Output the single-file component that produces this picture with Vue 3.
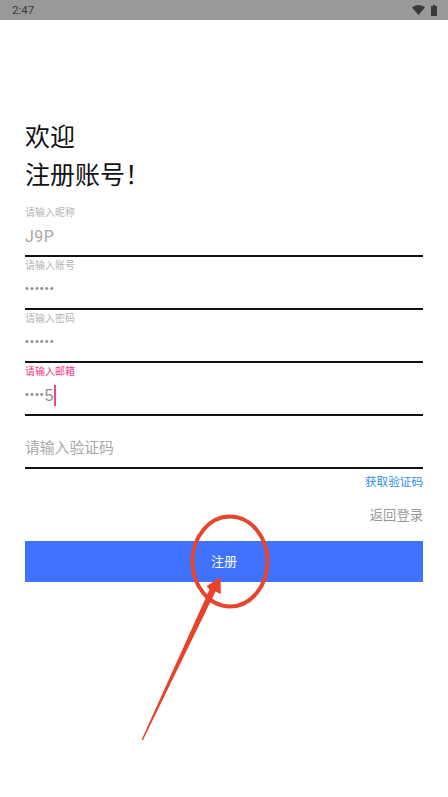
<template>
	<div class="page">
		<div class="status-bar">
			<span class="time">2:47</span>
			<div class="status-icons">
				<svg class="wifi" width="13" height="10" viewBox="0 0 13 10">
					<path d="M0 2.600C1.800 1 4 0 6.500 0S11.200 1 13 2.600L6.500 10Z" fill="#3a3a3a" />
				</svg>
				<svg class="battery" width="6" height="11" viewBox="0 0 6 11">
					<path d="M2 0h2v1h2v10H0V1h2Z" fill="#3a3a3a" />
				</svg>
			</div>
		</div>

		<div class="form">
			<div class="title">
				<div>欢迎</div>
				<div>注册账号！</div>
			</div>

			<div v-for="item in fields" :key="item.label" class="field" :class="{ focused: item.focused }">
				<div class="field-label">{{ item.label }}</div>
				<div class="field-value" :class="{ dots: item.dots }">
					<span>{{ item.value }}</span><span v-if="item.tail" class="tail">{{ item.tail }}</span>
					<i v-if="item.focused" class="cursor"></i>
				</div>
			</div>

			<div class="field code-field">
				<span>请输入验证码</span>
			</div>

			<div class="get-code">获取验证码</div>
			<div class="back-login">返回登录</div>
			<div class="submit">注册</div>
		</div>

		<svg class="mark" width="448" height="797" viewBox="0 0 448 797">
			<ellipse cx="230" cy="561.500" rx="37.500" ry="45" fill="none" stroke="#e5462c" stroke-width="4" />
			<path d="M141.500 740L143 740L215.500 591.500L220.800 594L220.500 577L206.700 586L209.500 589.500Z" fill="#ea4228" />
		</svg>
	</div>
</template>

<script setup>
	const fields = [
		{ label: "请输入昵称", value: "J9P" },
		{ label: "请输入账号", value: "••••••", dots: true },
		{ label: "请输入密码", value: "••••••", dots: true },
		{ label: "请输入邮箱", value: "••••", tail: "5", dots: true, focused: true }
	];
</script>

<style>
	body {
		margin: 0;
		background: #fff;
	}
</style>

<style scoped>
	.page {
		position: relative;
		width: 448px;
		height: 797px;
		overflow: hidden;
		background: #fff;
		font-family: "Roboto", "Noto Sans CJK SC", sans-serif;
	}

	.status-bar {
		display: flex;
		align-items: center;
		justify-content: space-between;
		height: 20px;
		padding: 0 11px 0 12px;
		background: #999;
		color: #3a3a3a;
		font-size: 11.500px;
	}

	.status-icons {
		display: flex;
		align-items: center;
		gap: 6px;
	}

	.form {
		display: flex;
		flex-direction: column;
		padding: 99px 25px 0;
	}

	.title {
		font-size: 25px;
		line-height: 38px;
		color: #111;
		margin-bottom: 8.500px;
	}

	.field {
		box-sizing: border-box;
		height: 53.100px;
		border-bottom: 2px solid #111;
	}

	.field-label {
		height: 18px;
		font-size: 10px;
		line-height: 18px;
		color: #b4b4b4;
	}

	.focused .field-label {
		color: #f0348a;
	}

	.field-value {
		display: flex;
		align-items: center;
		height: 30px;
		font-size: 16px;
		color: #a8a8a8;
		letter-spacing: 0.500px;
	}

	.field-value.dots {
		box-sizing: border-box;
		padding-bottom: 3px;
		font-size: 11px;
		font-family: "Liberation Sans", sans-serif;
		color: #8e8e8e;
		letter-spacing: 1.100px;
	}

	.tail {
		margin-top: 3px;
		font-size: 16px;
		color: #8e8e8e;
		letter-spacing: 0;
	}

	.cursor {
		width: 2px;
		height: 21px;
		margin-top: 3px;
		background: #e8458c;
	}

	.code-field {
		display: flex;
		align-items: center;
		padding-top: 10px;
		font-size: 14.800px;
		color: #a8a8a8;
	}

	.get-code {
		margin-top: 4px;
		text-align: right;
		font-size: 11.600px;
		line-height: 18px;
		color: #2f8cf0;
	}

	.back-login {
		margin-top: 15px;
		text-align: right;
		font-size: 13.300px;
		line-height: 20px;
		color: #999;
	}

	.submit {
		box-sizing: border-box;
		display: flex;
		align-items: center;
		justify-content: center;
		height: 41px;
		padding-bottom: 2px;
		margin-top: 15px;
		background: #3f72ff;
		color: #fff;
		font-size: 13px;
	}

	.mark {
		position: absolute;
		top: 0;
		left: 0;
		pointer-events: none;
	}
</style>
